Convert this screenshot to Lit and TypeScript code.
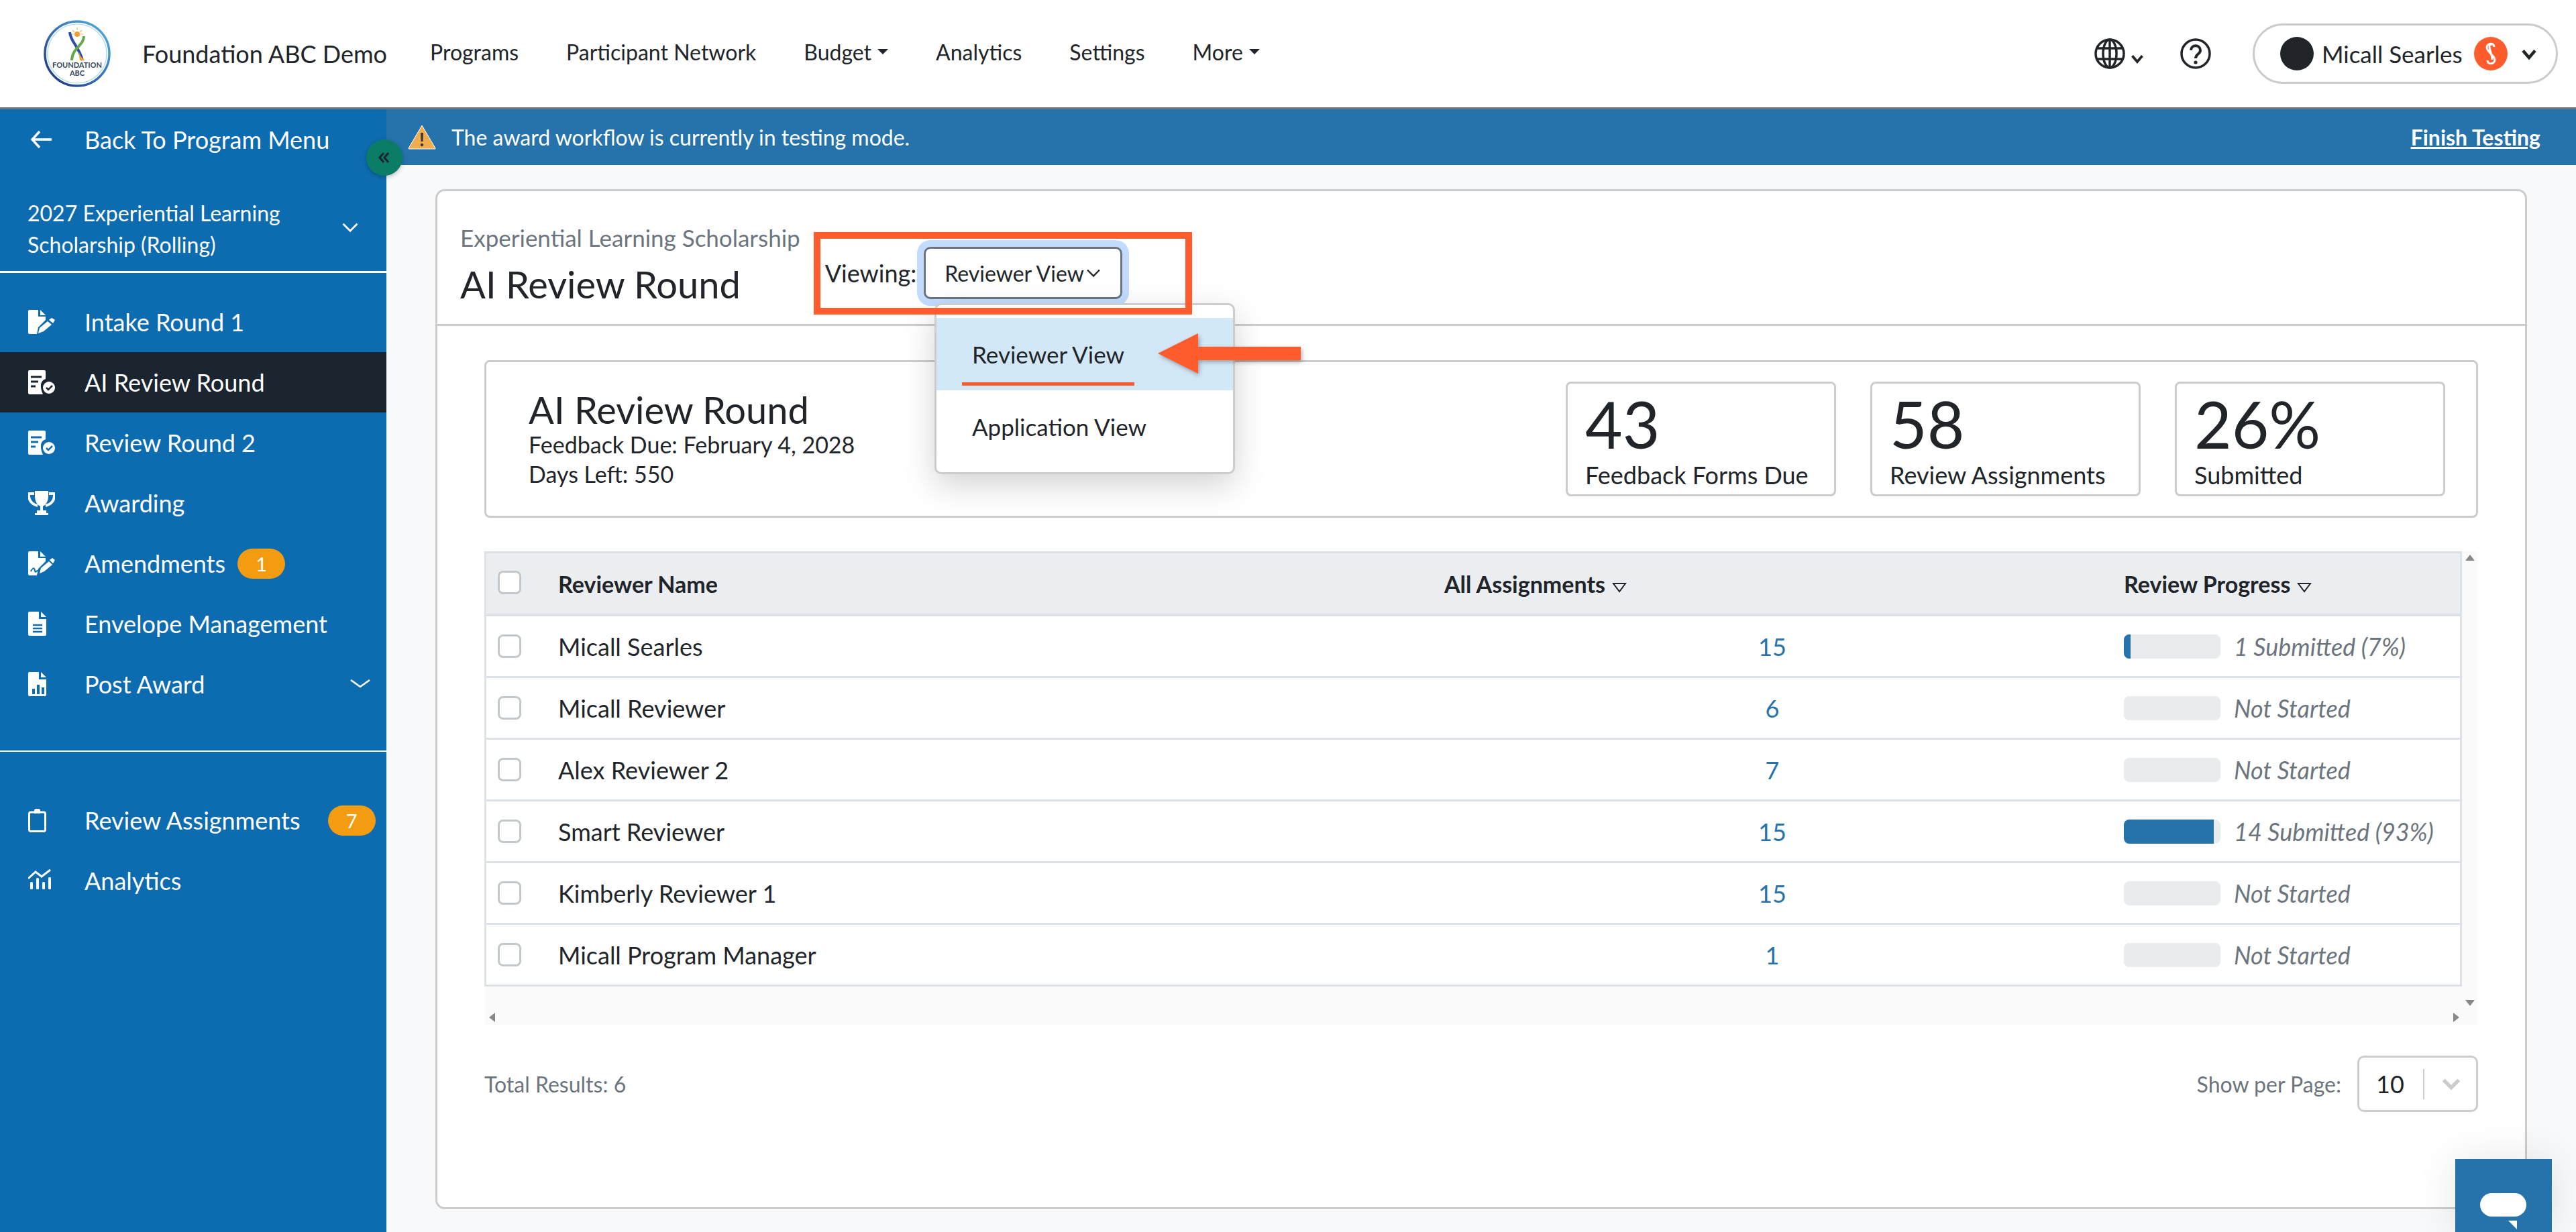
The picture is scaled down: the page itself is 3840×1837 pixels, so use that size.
import { html, css, LitElement, svg } from 'lit';
import { customElement } from 'lit/decorators.js';
import { styleMap } from 'lit/directives/style-map.js';

type Row_t = { name: string, count: number, pct: number, status: string };

const rows: Row_t[] = [
  { name: 'Micall Searles', count: 15, pct: 7, status: '1 Submitted (7%)' },
  { name: 'Micall Reviewer', count: 6, pct: 0, status: 'Not Started' },
  { name: 'Alex Reviewer 2', count: 7, pct: 0, status: 'Not Started' },
  { name: 'Smart Reviewer', count: 15, pct: 93, status: '14 Submitted (93%)' },
  { name: 'Kimberly Reviewer 1', count: 15, pct: 0, status: 'Not Started' },
  { name: 'Micall Program Manager', count: 1, pct: 0, status: 'Not Started' },
];

const filePen = svg`
  <path d="M2 0H15V10H26V15L15 26L13 36H2Q0 36 0 34V2Q0 0 2 0Z"/>
  <path d="M18 0L26 8H18Z"/>
  <path d="M17 27L29 17L35 22L23 32L15 35Z"/>
  <path d="M31 15L35 12L40 15L37 20Z"/>`;

const fileCheck = svg`
  <path d="M2 0H24Q26 0 26 2V13Q20 15 19 21T22 36H2Q0 36 0 34V2Q0 0 2 0Z"/>
  <path class="cut" d="M4 10H20M4 17H15M4 24H11" fill="none" stroke-width="3"/>
  <circle cx="31" cy="26" r="9"/>
  <path class="cut" d="M27 26L30 29L36 23" fill="none" stroke-width="2.5"/>`;

const trophy = svg`
  <path d="M10 0H30V8C30 16 26 21 22 23V29H27V33H30V36H10V33H13V29H18V23C14 21 10 16 10 8Z"/>
  <path d="M9 4H1C0 13 5 20 14 22M31 4H39C40 13 35 20 26 22" fill="none" stroke="#fff" stroke-width="4"/>`;

const fileSign = svg`
  <path d="M2 0H15V10H26V15L15 26L13 36H2Q0 36 0 34V2Q0 0 2 0Z"/>
  <path d="M18 0L26 8H18Z"/>
  <path class="cut" d="M4 30C7 24 9 24 10 29S13 26 16 30" fill="none" stroke-width="2"/>
  <path d="M19 25L31 15L36 20L24 30L17 33Z"/>
  <path d="M32 13L36 10L40 13L37 18Z"/>`;

const fileLines = svg`
  <path d="M2 0H16V11H27V34Q27 36 25 36H2Q0 36 0 34V2Q0 0 2 0Z"/>
  <path d="M19 0L27 8H19Z"/>
  <path class="cut" d="M7 20H21M7 25H21M7 30H21" fill="none" stroke-width="2.5"/>`;

const fileChart = svg`
  <path d="M2 0H16V11H27V34Q27 36 25 36H2Q0 36 0 34V2Q0 0 2 0Z"/>
  <path d="M19 0L27 8H19Z"/>
  <path class="cut" d="M6 25H10V33H6ZM13 19H17V33H13ZM20 23H24V33H20Z" style="fill:var(--row-bg);stroke:none"/>`;

const clipboard = svg`
  <rect x="1.5" y="6" width="24" height="28.5" rx="2.5" fill="none" stroke="#fff" stroke-width="3"/>
  <path d="M9 8V3.5Q9 1 11.5 1H15.5Q18 1 18 3.5V8Z"/>`;

const chartLine = svg`
  <path d="M0 15L11 5L20 12L33 2" fill="none" stroke="#fff" stroke-width="3"/>
  <rect x="3" y="20" width="4" height="11" rx="1.5"/>
  <rect x="12" y="14" width="4" height="17" rx="1.5"/>
  <rect x="21" y="20" width="4" height="11" rx="1.5"/>
  <rect x="30" y="13" width="4" height="18" rx="1.5"/>`;

const chevron = html`<svg viewBox="0 0 16 16" fill="none" stroke="currentColor" stroke-width="1.6"><path d="M2 5l6 6 6-6"/></svg>`;
const sortArrow = html`<svg class="sort" viewBox="0 0 22 16" fill="none" stroke="#212529" stroke-width="2"><path d="M2 2H20L11 14Z"/></svg>`;

@customElement('app-root')
export class AppRoot extends LitElement {
  static styles = css`
  :host {
    display: block;
    position: relative;
    height: 1837px;
    overflow: hidden;
    background: #f8f9fa;
    color: #212529;
    font-family: Lato, "Liberation Sans", sans-serif;
    font-size: 36px;
  }
  * { box-sizing: border-box; }

  /* top bar */
  .topbar {
    display: flex;
    align-items: center;
    height: 163px;
    padding: 0 27px 0 65px;
    background: #fff;
    border-bottom: 3px solid #6c757d;
  }
  .logo { width: 100px; height: 100px; flex: none; }
  .brand { margin-left: 47px; width: 429px; font-size: 36px; white-space: nowrap; }
  .nav { display: flex; gap: 71px; font-size: 32px; margin-top: -6px; }
  .nav span { display: flex; align-items: center; gap: 9px; white-space: nowrap; }
  .caret { width: 0; height: 0; border: 8px solid transparent; border-top-color: #212529; border-bottom: 0; }
  .top-right { margin-left: auto; display: flex; align-items: center; }
  .globe { width: 46px; height: 46px; }
  .globe-chev { width: 20px; height: 20px; margin: 14px 0 0 8px; color: #212529; }
  .help { width: 46px; height: 46px; margin-left: 54px; }
  .pill {
    display: flex;
    align-items: center;
    width: 455px;
    height: 90px;
    margin-left: 62px;
    padding-left: 38px;
    border: 3px solid #ccc;
    border-radius: 45px;
    background: #fff;
    font-size: 35px;
  }
  .avatar { width: 50px; height: 50px; border-radius: 50%; background: #212529; flex: none; }
  .pill-name { margin-left: 12px; width: 227px; white-space: nowrap; }
  .pill-s { width: 50px; height: 50px; flex: none; }
  .pill-chev { width: 24px; height: 24px; margin-left: 20px; stroke-width: 3; }

  .frame { display: flex; height: 1674px; }

  /* side menu */
  .side {
    width: 576px;
    flex: none;
    background: #0d6cb0;
    color: #fff;
    --row-bg: #0d6cb0;
  }
  .back { display: flex; align-items: center; height: 90px; margin-top: 0; padding-left: 45px; white-space: nowrap; }
  .back svg { width: 34px; height: 34px; flex: none; margin-right: 47px; }
  .program {
    display: flex;
    align-items: center;
    justify-content: space-between;
    height: 126px;
    margin-top: 25px;
    padding: 0 40px 0 41px;
    font-size: 32px;
    line-height: 47px;
  }
  .program svg { width: 28px; height: 28px; flex: none; margin-bottom: 4px; }
  .side-line { height: 3px; background: #fff; margin-top: 0; }
  .menu { margin-top: 28px; }
  .menu.second { margin-top: 57px; }
  .sep { height: 2px; background: #fff; margin-top: 54px; }
  .item {
    display: flex;
    align-items: center;
    height: 90px;
    padding-left: 42px;
    white-space: nowrap;
  }
  .item.active { background: #1b2530; --row-bg: #1b2530; }
  .item .ico { width: 40px; height: 36px; flex: none; fill: #fff; margin-right: 44px; }
  .cut { stroke: var(--row-bg); }
  .badge {
    display: flex;
    align-items: center;
    justify-content: center;
    width: 71px;
    height: 45px;
    border-radius: 23px;
    background: #f39c12;
    font-size: 29px;
  }
  .item .chev { width: 32px; height: 32px; margin-left: auto; margin-right: 23px; }

  /* main column */
  .main { flex: 1; min-width: 0; }
  .banner {
    display: flex;
    align-items: center;
    height: 83px;
    padding: 0 53px 0 32px;
    background: #2573aa;
    color: #fff;
    font-size: 32px;
  }
  .banner svg { width: 42px; height: 37px; margin-right: 23px; flex: none; }
  .banner a { margin-left: auto; font-weight: 700; text-decoration: underline; }

  .card {
    height: 1521px;
    margin: 36px 73px 0;
    border: 3px solid #ccc;
    border-radius: 14px;
    background: #fff;
  }
  .card-head {
    display: flex;
    align-items: flex-end;
    gap: 37px;
    height: 201px;
    padding: 0 0 37px 34px;
    border-bottom: 3px solid #ccc;
  }
  .eyebrow { font-size: 35px; color: #6c757d; line-height: 44px; white-space: nowrap; }
  .title { font-size: 56px; line-height: 68px; margin-top: 14px; margin-bottom: -12px; white-space: nowrap; }
  .viewing { display: flex; align-items: center; gap: 11px; height: 78px; font-size: 36px; white-space: nowrap; }
  .view-btn {
    display: flex;
    align-items: center;
    justify-content: space-between;
    width: 296px;
    height: 78px;
    padding: 0 28px 0 28px;
    border: 3px solid #6c757d;
    border-radius: 10px;
    background: #fff;
    box-shadow: 0 0 0 10px #c2dbfe;
    font-size: 32px;
  }
  .view-btn svg { width: 24px; height: 24px; }

  .card-body { padding: 51px 70px 0; }
  .summary {
    display: flex;
    align-items: center;
    justify-content: space-between;
    height: 235px;
    padding: 0 46px 0 63px;
    border: 3px solid #ccc;
    border-radius: 8px;
  }
  .sum-title { font-size: 56px; line-height: 60px; }
  .sum-line { font-size: 34px; line-height: 44px; }
  .stats { display: flex; gap: 51px; }
  .stat {
    width: 403px;
    height: 171px;
    padding: 4px 26px 0;
    border: 3px solid #ccc;
    border-radius: 8px;
    white-space: nowrap;
  }
  .stat-num { font-size: 96px; line-height: 112px; }
  .stat-label { font-size: 36px; line-height: 44px; margin-top: -2px; }

  .scroller {
    position: relative;
    height: 706px;
    margin-top: 50px;
    padding-right: 24px;
    background: #fafafa;
  }
  .table { border: solid #dee2e6; border-width: 3px 3px 0; background: #fff; }
  .row {
    display: grid;
    grid-template-columns: 107px 1292px 1036px 1fr;
    align-items: center;
    height: 92px;
    border-bottom: 3px solid #dee2e6;
    font-size: 36px;
    white-space: nowrap;
  }
  .row.head {
    height: 94px;
    border-bottom-width: 4px;
    background: #ebeef0;
    font-weight: 700;
    font-size: 34px;
  }
  .check {
    width: 35px;
    height: 35px;
    margin-left: 17px;
    border: 3px solid #c3c8cc;
    border-radius: 8px;
    background: #fff;
  }
  .row.head .check { margin-top: -4px; }
  .row .sort { width: 22px; height: 16px; margin-left: 10px; }
  .col-assign { padding-left: 29px; }
  .col-progress { padding-left: 6px; }
  .count { text-align: center; color: #2573aa; }
  .prog { display: flex; align-items: center; gap: 20px; padding-left: 6px; }
  .bar { width: 144px; height: 36px; border-radius: 8px; background: #e9ecef; overflow: hidden; flex: none; }
  .fill { height: 100%; background: #2573aa; }
  .status { font-style: italic; color: #6c757d; }
  .arrow-sb { position: absolute; width: 0; height: 0; border: 7px solid transparent; }
  .sb-up { right: 5px; top: 5px; border-bottom: 9px solid #888; border-top: 0; }
  .sb-down { right: 5px; bottom: 28px; border-top: 9px solid #888; border-bottom: 0; }
  .sb-right { right: 28px; bottom: 4px; border-left: 9px solid #888; border-right: 0; }
  .sb-left { left: 7px; bottom: 4px; border-right: 9px solid #888; border-left: 0; }

  .foot {
    display: flex;
    align-items: center;
    justify-content: space-between;
    margin-top: 46px;
    color: #6c757d;
    font-size: 32px;
  }
  .per { display: flex; align-items: center; gap: 24px; }
  .per-select {
    display: flex;
    align-items: center;
    width: 180px;
    height: 84px;
    padding-left: 25px;
    border: 3px solid #ccc;
    border-radius: 10px;
    color: #212529;
    font-size: 36px;
  }
  .per-div { width: 2px; height: 45px; background: #ccc; margin-left: 28px; }
  .per-select svg { width: 30px; height: 30px; margin-left: 25px; color: #ccc; stroke-width: 3; }

  /* things lying over the page */
  .collapse {
    position: absolute;
    left: 546px;
    top: 208px;
    width: 54px;
    height: 54px;
    border-radius: 50%;
    background: #0b7d66;
    box-shadow: 0 2px 6px rgba(0, 0, 0, .25);
    display: flex;
    align-items: center;
    justify-content: center;
  }
  .collapse svg { width: 22px; height: 22px; }
  .menu-pop {
    position: absolute;
    left: 1393px;
    top: 452px;
    width: 448px;
    height: 255px;
    padding-top: 19px;
    border: 3px solid #ccc;
    border-radius: 10px;
    background: #fff;
    box-shadow: 0 16px 48px rgba(0, 0, 0, .175);
  }
  .pop-item { display: flex; align-items: center; height: 108px; padding-left: 53px; font-size: 35px; white-space: nowrap; }
  .pop-item.on { background: #d3e8f6; }
  .mark-box { position: absolute; left: 1213px; top: 346px; width: 564px; height: 123px; border: 10px solid #ff5c2e; }
  .mark-line { position: absolute; left: 1434px; top: 570px; width: 257px; height: 5px; background: #ff5c2e; }
  .mark-arrow {
    position: absolute;
    left: 1726px;
    top: 497px;
    width: 213px;
    height: 60px;
    overflow: visible;
    filter: drop-shadow(2px 3px 3px rgba(0, 0, 0, .3));
  }
  .chat {
    position: absolute;
    left: 3660px;
    top: 1728px;
    width: 144px;
    height: 109px;
    background: #2573aa;
    box-shadow: 0 0 60px rgba(0, 0, 0, .1);
  }
  .chat svg { position: absolute; left: 37px; top: 51px; width: 69px; height: 54px; }
  `;

  private logo() {
    return html`
    <svg class="logo" viewBox="0 0 100 100">
      <defs>
        <linearGradient id="ring" x1="0" y1="1" x2="1" y2="0">
          <stop offset="0" stop-color="#1c2f80"/>
          <stop offset="1" stop-color="#55b4e6"/>
        </linearGradient>
      </defs>
      <circle cx="50" cy="50" r="48" fill="#fff" stroke="url(#ring)" stroke-width="3.5"/>
      <circle cx="50" cy="50" r="44" fill="none" stroke="#a8d8f0" stroke-width="1.2"/>
      <circle cx="50" cy="21" r="4" fill="#f0a030"/>
      <path d="M50 11V15M43 15L46 18M57 15L54 18M41 21H45M59 21H55" stroke="#f4b860" stroke-width="1.2"/>
      <path d="M39 18C40 32 52 38 58 60" fill="none" stroke="#2b4fa8" stroke-width="4"/>
      <path d="M60 24C60 38 42 42 42 60" fill="none" stroke="#63a84a" stroke-width="4"/>
      <path d="M52 46C54 52 56 56 62 60H54Z" fill="#f0a030"/>
      <text x="50" y="71" text-anchor="middle" font-size="11" font-weight="700" fill="#33475b" font-family="Lato">FOUNDATION</text>
      <text x="50" y="83" text-anchor="middle" font-size="11" font-weight="700" fill="#33475b" font-family="Lato">ABC</text>
    </svg>`;
  }

  private item(icon: unknown, label: string, opts: { active?: boolean, badge?: string, gap?: number, chev?: boolean } = {}) {
    return html`
    <div class="item ${opts.active ? 'active' : ''}">
      <svg class="ico" viewBox="0 0 40 36">${icon}</svg>
      <span>${label}</span>
      ${opts.badge ? html`<span class="badge" style=${styleMap({ marginLeft: `${opts.gap}px` })}>${opts.badge}</span>` : ''}
      ${opts.chev ? html`<svg class="chev" viewBox="0 0 16 16" fill="none" stroke="#fff" stroke-width="1.3"><path d="M1 5l7 5 7-5"/></svg>` : ''}
    </div>`;
  }

  render() {
    return html`
    <div class="topbar">
      ${this.logo()}
      <div class="brand">Foundation ABC Demo</div>
      <div class="nav">
        <span>Programs</span>
        <span>Participant Network</span>
        <span>Budget <i class="caret"></i></span>
        <span>Analytics</span>
        <span>Settings</span>
        <span>More <i class="caret"></i></span>
      </div>
      <div class="top-right">
        <svg class="globe" viewBox="0 0 46 46" fill="none" stroke="#212529" stroke-width="3.5">
          <circle cx="23" cy="23" r="21"/>
          <ellipse cx="23" cy="23" rx="10" ry="21"/>
          <path d="M23 2V44M4 15H42M4 31H42"/>
        </svg>
        <svg class="globe-chev" viewBox="0 0 16 16" fill="none" stroke="currentColor" stroke-width="3"><path d="M2 5l6 7 6-7"/></svg>
        <svg class="help" viewBox="0 0 46 46" fill="none" stroke="#212529" stroke-width="3.5">
          <circle cx="23" cy="23" r="21"/>
          <path d="M16 18C16 9 30 9 30 18C30 24 23 23 23 30" stroke-width="4"/>
          <circle cx="23" cy="36" r="2.6" fill="#212529" stroke="none"/>
        </svg>
        <div class="pill">
          <div class="avatar"></div>
          <div class="pill-name">Micall Searles</div>
          <svg class="pill-s" viewBox="0 0 50 50">
            <circle cx="25" cy="25" r="25" fill="#ff5c2e"/>
            <path d="M30 15C30 8 19 9 19 16C19 22 31 28 31 34C31 41 20 42 20 35M25 13C25 11 23 12 23 15C23 20 27 26 27 34" fill="none" stroke="#fff" stroke-width="3"/>
          </svg>
          <svg class="pill-chev" viewBox="0 0 16 16" fill="none" stroke="#212529" stroke-width="3.2"><path d="M2 5l6 7 6-7"/></svg>
        </div>
      </div>
    </div>

    <div class="frame">
      <aside class="side">
        <div class="back">
          <svg viewBox="0 0 34 34" fill="none" stroke="#fff" stroke-width="3.4"><path d="M32 17H3M14 5L3 17L14 29"/></svg>
          Back To Program Menu
        </div>
        <div class="program">
          <div>2027 Experiential Learning<br>Scholarship (Rolling)</div>
          <svg viewBox="0 0 16 16" fill="none" stroke="#fff" stroke-width="1.6"><path d="M2 5l6 6 6-6"/></svg>
        </div>
        <div class="side-line"></div>
        <div class="menu">
          ${this.item(filePen, 'Intake Round 1')}
          ${this.item(fileCheck, 'AI Review Round', { active: true })}
          ${this.item(fileCheck, 'Review Round 2')}
          ${this.item(trophy, 'Awarding')}
          ${this.item(fileSign, 'Amendments', { badge: '1', gap: 18 })}
          ${this.item(fileLines, 'Envelope Management')}
          ${this.item(fileChart, 'Post Award', { chev: true })}
        </div>
        <div class="sep"></div>
        <div class="menu second">
          ${this.item(clipboard, 'Review Assignments', { badge: '7', gap: 41 })}
          ${this.item(chartLine, 'Analytics')}
        </div>
      </aside>

      <main class="main">
        <div class="banner">
          <svg viewBox="0 0 42 37">
            <path d="M21 1L41 35Q41.500 36 40 36H2Q.5 36 1 35Z" fill="#f0ad4e" stroke="#fff" stroke-width="1"/>
            <path d="M19 12H23L22.500 25H19.500Z" fill="#3a3a3a"/>
            <circle cx="21" cy="30" r="2.300" fill="#3a3a3a"/>
          </svg>
          <span>The award workflow is currently in testing mode.</span>
          <a>Finish Testing</a>
        </div>

        <section class="card">
          <div class="card-head">
            <div>
              <div class="eyebrow">Experiential Learning Scholarship</div>
              <div class="title">AI Review Round</div>
            </div>
            <div class="viewing">
              Viewing:
              <div class="view-btn">Reviewer View ${chevron}</div>
            </div>
          </div>

          <div class="card-body">
            <div class="summary">
              <div>
                <div class="sum-title">AI Review Round</div>
                <div class="sum-line">Feedback Due: February 4, 2028</div>
                <div class="sum-line">Days Left: 550</div>
              </div>
              <div class="stats">
                <div class="stat"><div class="stat-num">43</div><div class="stat-label">Feedback Forms Due</div></div>
                <div class="stat"><div class="stat-num">58</div><div class="stat-label">Review Assignments</div></div>
                <div class="stat"><div class="stat-num">26%</div><div class="stat-label">Submitted</div></div>
              </div>
            </div>

            <div class="scroller">
              <div class="table">
                <div class="row head">
                  <div class="check"></div>
                  <div>Reviewer Name</div>
                  <div class="col-assign">All Assignments${sortArrow}</div>
                  <div class="col-progress">Review Progress${sortArrow}</div>
                </div>
                ${rows.map(r => html`
                <div class="row">
                  <div class="check"></div>
                  <div>${r.name}</div>
                  <div class="count">${r.count}</div>
                  <div class="prog">
                    <div class="bar"><div class="fill" style=${styleMap({ width: `${r.pct}%` })}></div></div>
                    <span class="status">${r.status}</span>
                  </div>
                </div>`)}
              </div>
              <i class="arrow-sb sb-up"></i>
              <i class="arrow-sb sb-down"></i>
              <i class="arrow-sb sb-right"></i>
              <i class="arrow-sb sb-left"></i>
            </div>

            <div class="foot">
              <span>Total Results: 6</span>
              <div class="per">
                <span>Show per Page:</span>
                <div class="per-select">
                  10<div class="per-div"></div>
                  <svg viewBox="0 0 16 16" fill="none" stroke="currentColor" stroke-width="3"><path d="M2 5l6 6 6-6"/></svg>
                </div>
              </div>
            </div>
          </div>
        </section>
      </main>
    </div>

    <div class="collapse">
      <svg viewBox="0 0 22 22" fill="none" stroke="#1b2530" stroke-width="3"><path d="M10 4L4 11L10 18M17 4L11 11L17 18"/></svg>
    </div>
    <div class="menu-pop">
      <div class="pop-item on">Reviewer View</div>
      <div class="pop-item">Application View</div>
    </div>
    <div class="mark-box"></div>
    <div class="mark-line"></div>
    <svg class="mark-arrow" viewBox="0 0 213 60"><path d="M0 30L60 0V20H213V40H60V60Z" fill="#ff5c2e"/></svg>
    <div class="chat">
      <svg viewBox="0 0 69 54">
        <rect width="69" height="35" rx="17.500" fill="#fff"/>
        <path d="M42 41H55V54Z" fill="#fff"/>
      </svg>
    </div>
    `;
  }
}
